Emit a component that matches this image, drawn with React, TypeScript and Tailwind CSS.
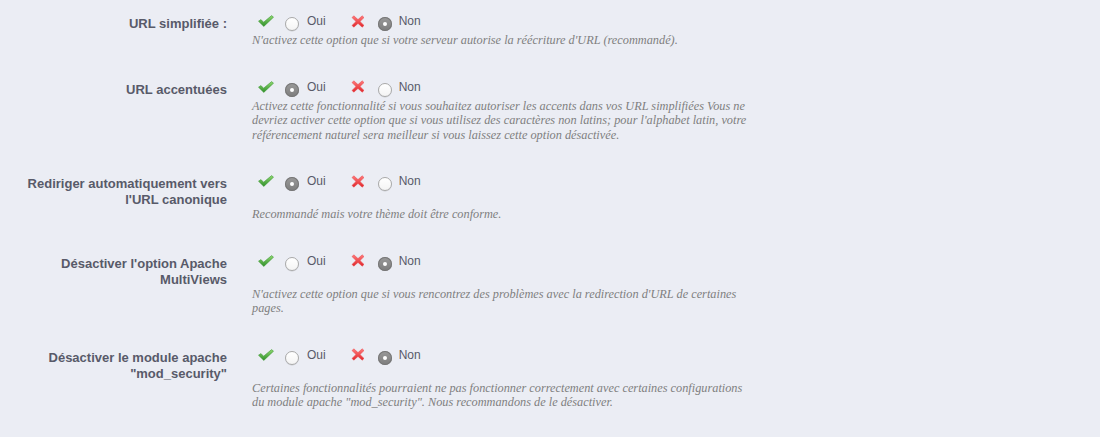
import React from "react";

type Row = {
  label: string[];
  on: boolean;
  help: string;
};

const rows: Row[] = [
  {
    label: ["URL simplifiée :"],
    on: false,
    help: "N'activez cette option que si votre serveur autorise la réécriture d'URL (recommandé).",
  },
  {
    label: ["URL accentuées"],
    on: true,
    help: "Activez cette fonctionnalité si vous souhaitez autoriser les accents dans vos URL simplifiées Vous ne devriez activer cette option que si vous utilisez des caractères non latins; pour l'alphabet latin, votre référencement naturel sera meilleur si vous laissez cette option désactivée.",
  },
  {
    label: ["Rediriger automatiquement vers", "l'URL canonique"],
    on: true,
    help: "Recommandé mais votre thème doit être conforme.",
  },
  {
    label: ["Désactiver l'option Apache", "MultiViews"],
    on: false,
    help: "N'activez cette option que si vous rencontrez des problèmes avec la redirection d'URL de certaines pages.",
  },
  {
    label: ["Désactiver le module apache", "\"mod_security\""],
    on: false,
    help: "Certaines fonctionnalités pourraient ne pas fonctionner correctement avec certaines configurations du module apache \"mod_security\". Nous recommandons de le désactiver.",
  },
];

function CheckIcon() {
  return (
    <svg width="16" height="12" viewBox="0 0 16 12" className="block shrink-0">
      <defs>
        <linearGradient id="gchk" x1="0" y1="0" x2="0" y2="1">
          <stop offset="0" stopColor="#8fd870" />
          <stop offset="1" stopColor="#2f8f2a" />
        </linearGradient>
      </defs>
      <path
        d="M0.5 6.2 L3 4.6 L5.6 7.2 L13.6 0.6 L15.5 2.2 L5.8 11.4 Z"
        fill="url(#gchk)"
        stroke="#3f9a35"
        strokeWidth="0.6"
        strokeLinejoin="round"
      />
    </svg>
  );
}

function CrossIcon() {
  return (
    <svg width="14" height="13" viewBox="0 0 14 13" className="block shrink-0">
      <defs>
        <linearGradient id="gx" x1="0" y1="0" x2="0" y2="1">
          <stop offset="0" stopColor="#ff7a7a" />
          <stop offset="1" stopColor="#e0262a" />
        </linearGradient>
      </defs>
      <path
        d="M1 2.6 L2.8 0.8 L7 4.6 L11.2 0.8 L13 2.6 L9 6.5 L13 10.4 L11.2 12.2 L7 8.4 L2.8 12.2 L1 10.4 L5 6.5 Z"
        fill="url(#gx)"
        stroke="#e8484c"
        strokeWidth="0.5"
        strokeLinejoin="round"
      />
    </svg>
  );
}

function Radio({ checked }: { checked: boolean }) {
  if (checked) {
    return (
      <span className="flex h-[14px] w-[14px] shrink-0 translate-y-[3px] items-center justify-center rounded-full bg-gradient-to-b from-[#9a9a9a] to-[#7d7d7d] shadow-[inset_0_0_0_1px_#777]">
        <span className="block h-[4px] w-[4px] rounded-full bg-white" />
      </span>
    );
  }
  return (
    <span className="block h-[14px] w-[14px] shrink-0 translate-y-[3px] rounded-full border border-[#a9a9a9] bg-gradient-to-b from-white to-[#f4f4f4] shadow-[0_0.5px_0.5px_rgba(0,0,0,0.15)]" />
  );
}

function OptionRow({ row }: { row: Row }) {
  return (
    <div className="grid grid-cols-[227px_500px] gap-x-[25px] pb-[29px]">
      <div className="-mb-[3px] pt-[5px] text-right text-[13px] font-bold leading-[16px] text-[#585a69]">
        {row.label.map((l) => (
          <div key={l}>{l}</div>
        ))}
      </div>
      <div className="flex h-[20px] items-center self-start pl-[6px] text-[12px] text-[#585a69]">
        <CheckIcon />
        <span className="ml-[11px]">
          <Radio checked={row.on} />
        </span>
        <span className="ml-[8px]">Oui</span>
        <span className="ml-[25px]">
          <CrossIcon />
        </span>
        <span className="ml-[13px]">
          <Radio checked={!row.on} />
        </span>
        <span className="ml-[7px]">Non</span>
      </div>
      <p className="col-start-2 mt-[2px] font-['Liberation_Serif',serif] text-[12.3px] italic leading-[14.5px] text-[#7f7f7f]">
        {row.help}
      </p>
    </div>
  );
}

export default function App() {
  return (
    <div className="min-h-[437px] w-full bg-[#ebedf4] pt-[11px] font-['Liberation_Sans',Arial,sans-serif]">
      {rows.map((r) => (
        <OptionRow key={r.label[0]} row={r} />
      ))}
    </div>
  );
}
